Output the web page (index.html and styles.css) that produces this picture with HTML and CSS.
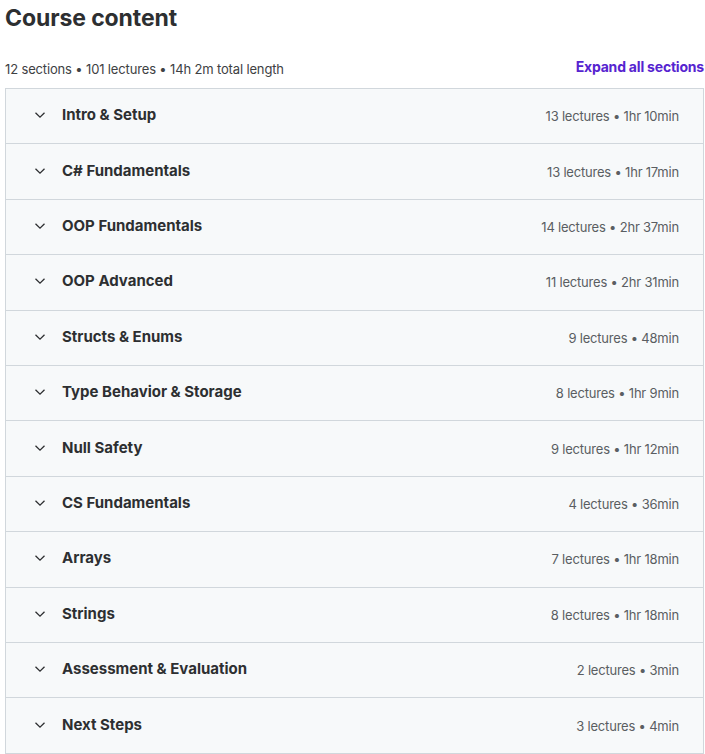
FILE: index.html
```html
<!DOCTYPE html>
<html lang="en">
<head>
    <meta charset="UTF-8">
    <title>Course content</title>
    <link rel="stylesheet" href="styles.css">
</head>
<body>
    <div class="course-content">
        <h2 class="title">Course content</h2>
        <div class="summary">
            <span class="summary-text">12 sections • 101 lectures • 14h 2m total length</span>
            <button class="expand-all">Expand all sections</button>
        </div>

        <div class="sections">
            <div class="section">
                <span class="chevron"><svg viewBox="0 0 12 8"><path d="M1.5 1.8 6 6.2l4.5-4.4"/></svg></span>
                <span class="section-title">Intro &amp; Setup</span>
                <span class="section-meta">13 lectures • 1hr 10min</span>
            </div>
            <div class="section">
                <span class="chevron"><svg viewBox="0 0 12 8"><path d="M1.5 1.8 6 6.2l4.5-4.4"/></svg></span>
                <span class="section-title">C# Fundamentals</span>
                <span class="section-meta">13 lectures • 1hr 17min</span>
            </div>
            <div class="section">
                <span class="chevron"><svg viewBox="0 0 12 8"><path d="M1.5 1.8 6 6.2l4.5-4.4"/></svg></span>
                <span class="section-title">OOP Fundamentals</span>
                <span class="section-meta">14 lectures • 2hr 37min</span>
            </div>
            <div class="section">
                <span class="chevron"><svg viewBox="0 0 12 8"><path d="M1.5 1.8 6 6.2l4.5-4.4"/></svg></span>
                <span class="section-title">OOP Advanced</span>
                <span class="section-meta">11 lectures • 2hr 31min</span>
            </div>
            <div class="section">
                <span class="chevron"><svg viewBox="0 0 12 8"><path d="M1.5 1.8 6 6.2l4.5-4.4"/></svg></span>
                <span class="section-title">Structs &amp; Enums</span>
                <span class="section-meta">9 lectures • 48min</span>
            </div>
            <div class="section">
                <span class="chevron"><svg viewBox="0 0 12 8"><path d="M1.5 1.8 6 6.2l4.5-4.4"/></svg></span>
                <span class="section-title">Type Behavior &amp; Storage</span>
                <span class="section-meta">8 lectures • 1hr 9min</span>
            </div>
            <div class="section">
                <span class="chevron"><svg viewBox="0 0 12 8"><path d="M1.5 1.8 6 6.2l4.5-4.4"/></svg></span>
                <span class="section-title">Null Safety</span>
                <span class="section-meta">9 lectures • 1hr 12min</span>
            </div>
            <div class="section">
                <span class="chevron"><svg viewBox="0 0 12 8"><path d="M1.5 1.8 6 6.2l4.5-4.4"/></svg></span>
                <span class="section-title">CS Fundamentals</span>
                <span class="section-meta">4 lectures • 36min</span>
            </div>
            <div class="section">
                <span class="chevron"><svg viewBox="0 0 12 8"><path d="M1.5 1.8 6 6.2l4.5-4.4"/></svg></span>
                <span class="section-title">Arrays</span>
                <span class="section-meta">7 lectures • 1hr 18min</span>
            </div>
            <div class="section">
                <span class="chevron"><svg viewBox="0 0 12 8"><path d="M1.5 1.8 6 6.2l4.5-4.4"/></svg></span>
                <span class="section-title">Strings</span>
                <span class="section-meta">8 lectures • 1hr 18min</span>
            </div>
            <div class="section">
                <span class="chevron"><svg viewBox="0 0 12 8"><path d="M1.5 1.8 6 6.2l4.5-4.4"/></svg></span>
                <span class="section-title">Assessment &amp; Evaluation</span>
                <span class="section-meta">2 lectures • 3min</span>
            </div>
            <div class="section">
                <span class="chevron"><svg viewBox="0 0 12 8"><path d="M1.5 1.8 6 6.2l4.5-4.4"/></svg></span>
                <span class="section-title">Next Steps</span>
                <span class="section-meta">3 lectures • 4min</span>
            </div>
        </div>
    </div>
</body>
</html>
```

FILE: styles.css
```css
body {
    margin: 0;
    font-family: Inter, "Noto Sans", sans-serif;
    color: #2d2f31;
    background: #fff;
}

.course-content {
    padding: 0 1px 0 5px;
}

.title {
    margin: 0;
    padding-top: 4px;
    font-size: 23px;
    line-height: 28px;
    font-weight: 700;
    letter-spacing: -0.1px;
}

.summary {
    display: flex;
    justify-content: space-between;
    align-items: flex-end;
    margin-top: 26px;
    padding-bottom: 9px;
}

.summary-text {
    font-size: 13px;
    line-height: 20px;
    letter-spacing: -0.15px;
    color: #3e4143;
}

.expand-all {
    background: none;
    border: none;
    padding: 0;
    margin-bottom: 4px;
    font-family: inherit;
    font-size: 14px;
    font-weight: 700;
    color: #5624d0;
    cursor: pointer;
    letter-spacing: -0.2px;
}

.sections {
    border: 1px solid #d1d7dc;
    border-bottom: none;
}

.section {
    display: flex;
    align-items: center;
    height: 54.42px;
    padding: 0 24px 0 28px;
    background: #f7f9fa;
    border-bottom: 1px solid #d1d7dc;
}

.chevron {
    display: flex;
    width: 12px;
    margin-right: 16px;
    margin-top: -2px;
}

.chevron svg {
    width: 12px;
    height: 8px;
    fill: none;
    stroke: #2d2f31;
    stroke-width: 1.3;
}

.section-title {
    flex: 1;
    font-size: 15px;
    font-weight: 700;
    letter-spacing: 0;
    margin-top: -3px;
}

.section-meta {
    font-size: 13px;
    color: #5a5e62;
    letter-spacing: -0.2px;
}
```
